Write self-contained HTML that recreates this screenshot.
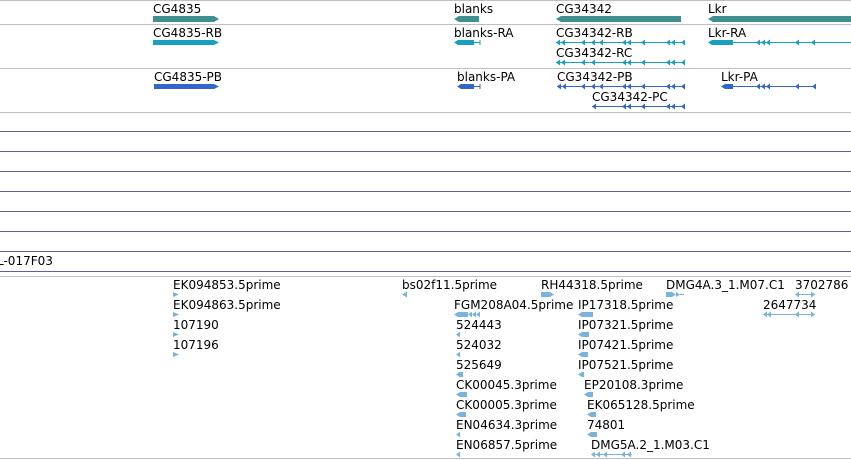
<!DOCTYPE html>
<html><head><meta charset="utf-8"><style>
html,body{margin:0;padding:0;background:#fff;width:851px;height:460px;overflow:hidden}
svg{display:block}
text{font-family:"DejaVu Sans","Liberation Sans",sans-serif;font-size:12px;fill:#000}
</style></head><body>
<svg width="851" height="460" viewBox="0 0 851 460" xmlns="http://www.w3.org/2000/svg">
<g stroke="#c0c0c0" stroke-width="1">
<line x1="0" y1="0.5" x2="851" y2="0.5"/>
<line x1="0" y1="24.5" x2="851" y2="24.5"/>
<line x1="0" y1="68.5" x2="851" y2="68.5"/>
<line x1="0" y1="112.5" x2="851" y2="112.5"/>
<line x1="0" y1="276.5" x2="851" y2="276.5"/>
<line x1="0" y1="458.5" x2="851" y2="458.5"/>
</g>
<g stroke="#6a5a9a" stroke-width="1">
<line x1="0" y1="131.5" x2="851" y2="131.5"/>
<line x1="0" y1="151.5" x2="851" y2="151.5"/>
<line x1="0" y1="171.5" x2="851" y2="171.5"/>
<line x1="0" y1="191.5" x2="851" y2="191.5"/>
<line x1="0" y1="211.5" x2="851" y2="211.5"/>
<line x1="0" y1="231.5" x2="851" y2="231.5"/>
<line x1="0" y1="251.5" x2="851" y2="251.5"/>
<line x1="0" y1="271.5" x2="851" y2="271.5"/>
</g>
<!-- gene track -->
<text x="153" y="13">CG4835</text>
<polygon points="153,16 214,16 219,19 214,22 153,22" fill="#3f8f8f"/>
<text x="454" y="13">blanks</text>
<polygon points="459,16 479,16 479,22 459,22 454,19" fill="#3f8f8f"/>
<text x="556" y="13">CG34342</text>
<polygon points="561,16 681,16 681,22 561,22 556,19" fill="#3f8f8f"/>
<text x="708" y="13">Lkr</text>
<polygon points="713,16 851,16 851,22 713,22 708,19" fill="#3f8f8f"/>
<!-- RNA -->
<g fill="#18a0c0" stroke="#18a0c0">
<text x="153" y="37" stroke="none" fill="#000">CG4835-RB</text>
<polygon points="153,40 214,40 219,42.5 214,45 153,45" stroke="none"/>
<text x="454" y="37" stroke="none" fill="#000">blanks-RA</text>
<polygon points="458,40 474,40 474,45 458,45 454,42.5" stroke="none"/>
<line x1="474" y1="42.5" x2="480" y2="42.5"/><line x1="480" y1="40" x2="480" y2="45"/>
<text x="556" y="37" stroke="none" fill="#000">CG34342-RB</text>
<line x1="556" y1="42.5" x2="685" y2="42.5"/>
<text x="556" y="57" stroke="none" fill="#000">CG34342-RC</text>
<line x1="556" y1="62.5" x2="685" y2="62.5"/>
<text x="708" y="37" stroke="none" fill="#000">Lkr-RA</text>
<polygon points="712,40 733,40 733,45 712,45 708,42.5" stroke="none"/>
<line x1="733" y1="42.5" x2="851" y2="42.5"/>
</g>
<g fill="#18a0c0">
<path d="M556 42.5l4-3v6zM561 42.5l4-3v6zM581 42.5l4-3v6zM591 42.5l4-3v6zM599 42.5l4-3v6zM622 42.5l4-3v6zM627 42.5l4-3v6zM641 42.5l4-3v6zM666 42.5l4-3v6zM671 42.5l4-3v6zM681 42.5l4-3v6z"/>
<path d="M556 62.5l4-3v6zM561 62.5l4-3v6zM581 62.5l4-3v6zM591 62.5l4-3v6zM622 62.5l4-3v6zM627 62.5l4-3v6zM641 62.5l4-3v6zM666 62.5l4-3v6zM671 62.5l4-3v6zM681 62.5l4-3v6z"/>
<path d="M756 42.5l4-3v6zM761 42.5l4-3v6zM766 42.5l4-3v6zM795 42.5l4-3v6zM811 42.5l4-3v6z"/>
</g>
<!-- protein -->
<g fill="#3366cc" stroke="#3366cc">
<text x="154" y="81" stroke="none" fill="#000">CG4835-PB</text>
<polygon points="154,84 214,84 219,86.5 214,89 154,89" stroke="none"/>
<text x="457" y="81" stroke="none" fill="#000">blanks-PA</text>
<polygon points="461,84 474,84 474,89 461,89 457,86.5" stroke="none"/>
<line x1="474" y1="86.5" x2="480" y2="86.5"/><line x1="480" y1="84" x2="480" y2="89"/>
<text x="557" y="81" stroke="none" fill="#000">CG34342-PB</text>
<line x1="557" y1="86.5" x2="685" y2="86.5"/>
<text x="592" y="101" stroke="none" fill="#000">CG34342-PC</text>
<line x1="592" y1="106.5" x2="685" y2="106.5"/>
<text x="721" y="81" stroke="none" fill="#000">Lkr-PA</text>
<polygon points="725,84 733,84 733,89 725,89 721,86.5" stroke="none"/>
<line x1="733" y1="86.5" x2="816" y2="86.5"/>
</g>
<g fill="#3366cc">
<path d="M557 86.5l4-3v6zM562 86.5l4-3v6zM581 86.5l4-3v6zM591 86.5l4-3v6zM599 86.5l4-3v6zM622 86.5l4-3v6zM627 86.5l4-3v6zM641 86.5l4-3v6zM666 86.5l4-3v6zM671 86.5l4-3v6zM681 86.5l4-3v6z"/>
<path d="M592 106.5l4-3v6zM622 106.5l4-3v6zM627 106.5l4-3v6zM641 106.5l4-3v6zM666 106.5l4-3v6zM671 106.5l4-3v6zM681 106.5l4-3v6z"/>
<path d="M756 86.5l4-3v6zM761 86.5l4-3v6zM766 86.5l4-3v6zM795 86.5l4-3v6zM812 86.5l4-3v6z"/>
</g>
<text x="-3" y="265">L-017F03</text>
<!-- ESTs -->
<g>
<text x="173" y="289">EK094853.5prime</text>
<text x="173" y="309">EK094863.5prime</text>
<text x="173" y="329">107190</text>
<text x="173" y="349">107196</text>
<text x="402" y="289">bs02f11.5prime</text>
<text x="541" y="289">RH44318.5prime</text>
<text x="666" y="289">DMG4A.3_1.M07.C1</text>
<text x="795" y="289">3702786</text>
<text x="454" y="309">FGM208A04.5prime</text>
<text x="578" y="309">IP17318.5prime</text>
<text x="763" y="309">2647734</text>
<text x="456" y="329">524443</text>
<text x="578" y="329">IP07321.5prime</text>
<text x="456" y="349">524032</text>
<text x="578" y="349">IP07421.5prime</text>
<text x="456" y="369">525649</text>
<text x="578" y="369">IP07521.5prime</text>
<text x="456" y="389">CK00045.3prime</text>
<text x="584" y="389">EP20108.3prime</text>
<text x="456" y="409">CK00005.3prime</text>
<text x="587" y="409">EK065128.5prime</text>
<text x="456" y="429">EN04634.3prime</text>
<text x="587" y="429">74801</text>
<text x="456" y="449">EN06857.5prime</text>
<text x="591" y="449">DMG5A.2_1.M03.C1</text>
</g>
<g fill="#7ab4dc" stroke="#7ab4dc">
<path stroke="none" d="M173 292l6 2.5-6 2.5zM173 312l6 2.5-6 2.5zM173 332l6 2.5-6 2.5zM173 352l6 2.5-6 2.5z"/>
<path stroke="none" d="M402 294.5l5-3v6z"/>
<path stroke="none" d="M541 292h9l4 2.5-4 2.5h-9z"/>
<path stroke="none" d="M666 292h6l3 2.5-3 2.5h-6zM672 292l4 2.5-4 2.5zM676 292l4 2.5-4 2.5z"/>
<line x1="680" y1="294.5" x2="684" y2="294.5"/>
<line x1="796" y1="294.5" x2="815" y2="294.5"/>
<path stroke="none" d="M795 294.5l4-3v6zM811 291.5l4 3-4 3z"/>
<path stroke="none" d="M458 312h10v5h-10l-4-2.5zM468 314.5l4-3v6zM472 314.5l4-3v6zM476 314.5l4-3v6z"/>
<path stroke="none" d="M582 312h11v5h-11l-4-2.5z"/>
<line x1="764" y1="314.5" x2="815" y2="314.5"/>
<path stroke="none" d="M763 314.5l4-3v6zM767 314.5l4-3v6zM795 314.5l4-3v6zM811 311.5l4 3-4 3z"/>
<path stroke="none" d="M456 334.5l4-3v6zM456 354.5l4-3v6zM456 374.5l4-3v6zM456 434.5l4-3v6zM456 454.5l4-3v6z"/>
<path stroke="none" d="M460 372h3v5h-3zM460 392h7v5h-7l-4-2.5zM460 412h6v5h-6l-4-2.5z"/>
<path stroke="none" d="M582 332h7v5h-7l-4-2.5zM582 352h6v5h-6l-4-2.5zM582 372h2v5h-2l-4-2.5z"/>
<path stroke="none" d="M588 392h5v5h-5l-4-2.5zM591 412h5v5h-5l-4-2.5zM591 432h6v5h-6l-4-2.5z"/>
<line x1="592" y1="454.5" x2="632" y2="454.5"/>
<path stroke="none" d="M591 454.5l4-3v6zM596 454.5l4-3v6zM603 454.5l4-3v6zM621 454.5l4-3v6zM627 454.5l4-3v6z"/>
</g>
</svg>
</body></html>
